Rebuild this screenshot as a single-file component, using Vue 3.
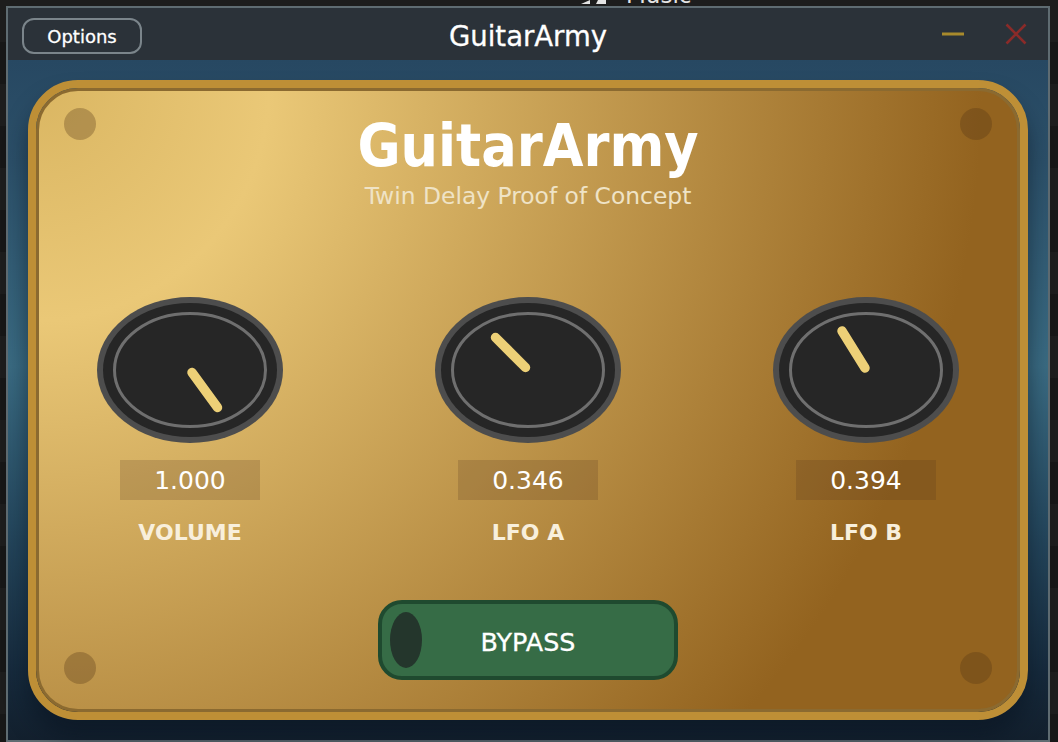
<script setup>
const knobs = [
  { label: "VOLUME", value: "1.000", x1: 95, y1: 75.5, x2: 120.5, y2: 110.5 },
  { label: "LFO A", value: "0.346", x1: 60.5, y1: 40.5, x2: 90.5, y2: 70.5 },
  { label: "LFO B", value: "0.394", x1: 69, y1: 34, x2: 92, y2: 71 },
];
const screws = ["tl", "tr", "bl", "br"];
</script>

<template>
  <div class="desk">
    <div class="behind">
      <svg class="behind-icon" viewBox="0 0 30 6" width="30" height="6">
        <path d="M1 4 L10 0 V4 Z M16 4 L18 0 H26 V4 Z" fill="#e4e4e4" />
      </svg>
      <span class="behind-text">Music</span>
    </div>

    <div class="window">
      <!-- TITLE BAR -->
      <header class="titlebar">
        <div class="bar-left">
          <button class="options">Options</button>
        </div>
        <div class="bar-title">GuitarArmy</div>
        <div class="bar-right">
          <svg class="win-btn" viewBox="0 0 24 24" width="24" height="24">
            <path d="M1 12 H23" stroke="#a88a2c" stroke-width="3" />
          </svg>
          <svg class="win-btn" viewBox="0 0 24 24" width="24" height="24">
            <path d="M2.5 2.5 L21.5 21.5 M21.5 2.5 L2.5 21.5" stroke="#8a2b29" stroke-width="2.6" />
          </svg>
        </div>
      </header>

      <!-- PLUGIN BODY -->
      <main class="body">
        <section class="panel">
          <div class="plate">
            <span v-for="s in screws" :key="s" class="screw" :class="s"></span>

            <h1 class="title">GuitarArmy</h1>
            <p class="subtitle">Twin Delay Proof of Concept</p>

            <div class="knobs">
              <div v-for="k in knobs" :key="k.label" class="knob-col">
                <svg class="knob" viewBox="0 0 186 146" width="186" height="146">
                  <ellipse cx="93" cy="73" rx="93" ry="73" fill="#4d4d4d" />
                  <ellipse cx="93" cy="73" rx="87" ry="67" fill="#262626" />
                  <ellipse cx="93" cy="73" rx="75.5" ry="56.5" fill="none" stroke="#6f6f6f" stroke-width="3" />
                  <line
                    :x1="k.x1"
                    :y1="k.y1"
                    :x2="k.x2"
                    :y2="k.y2"
                    stroke="#edd077"
                    stroke-width="9.5"
                    stroke-linecap="round"
                  />
                </svg>
                <div class="readout">{{ k.value }}</div>
                <div class="knob-label">{{ k.label }}</div>
              </div>
            </div>

            <button class="bypass">
              <span class="led"></span>
              BYPASS
            </button>
          </div>
        </section>
      </main>
    </div>
  </div>
</template>

<style>
html,
body {
  margin: 0;
  background: #191919;
  overflow: hidden;
}
</style>

<style scoped>
.desk {
  position: relative;
  width: 1058px;
  height: 742px;
  overflow: hidden;
  box-sizing: border-box;
  padding: 6px 8px 0 6px;
  background: repeating-linear-gradient(180deg, #1d1d1d 0, #1d1d1d 42px, #171717 42px, #171717 84px);
  font-family: "DejaVu Sans", sans-serif;
}

.behind {
  position: absolute;
  top: 0;
  left: 578px;
  height: 6px;
  width: 130px;
  overflow: hidden;
}

.behind-icon {
  position: absolute;
  left: 2px;
  top: 0;
}

.behind-text {
  position: absolute;
  left: 48px;
  top: -18px;
  color: #e4e4e4;
  font-size: 23px;
  line-height: 26px;
}

.window {
  width: 1044px;
  height: 736px;
  box-sizing: border-box;
  border: 2px solid #5f6c72;
  display: flex;
  flex-direction: column;
}

.titlebar {
  height: 52px;
  flex: none;
  background: #2b3239;
  display: grid;
  grid-template-columns: 1fr auto 1fr;
  align-items: center;
}

.bar-left {
  padding-left: 14px;
  display: flex;
  margin-top: 4px;
}

.options {
  width: 120px;
  height: 36px;
  box-sizing: border-box;
  border: 2px solid #7b858b;
  border-radius: 12px;
  background: transparent;
  color: #fff;
  font-family: inherit;
  font-size: 18px;
  -webkit-text-stroke: 0.3px #fff;
  padding: 0;
}

.bar-title {
  color: #fff;
  font-size: 27.5px;
  -webkit-text-stroke: 0.3px #fff;
  margin-top: 4px;
}

.bar-right {
  display: flex;
  justify-content: flex-end;
  gap: 39px;
  padding-right: 20px;
}

.body {
  flex: 1;
  padding: 20px;
  background: linear-gradient(180deg, #274862 0%, #2c5069 15%, #3a6b82 45%, #24465c 70%, #162a3c 90%, #13202e 100%);
}

.panel {
  height: 640px;
  box-sizing: border-box;
  border: 8px solid #be8f36;
  border-radius: 50px;
  box-shadow: 0 18px 22px rgba(10, 20, 32, 0.55);
}

.plate {
  position: relative;
  height: 624px;
  box-sizing: border-box;
  border: 3px solid #8b6a30;
  border-radius: 42px;
  display: flex;
  flex-direction: column;
  align-items: center;
  background: radial-gradient(circle 946px at 0 0, #dab662 0, #eac877 233px, #93631f 946px);
  background-origin: border-box;
}

.screw {
  position: absolute;
  width: 32px;
  height: 32px;
  border-radius: 50%;
  background: rgba(80, 50, 20, 0.3);
}

.screw.tl {
  top: 17px;
  left: 25px;
}

.screw.tr {
  top: 17px;
  right: 25px;
}

.screw.bl {
  bottom: 25px;
  left: 25px;
}

.screw.br {
  bottom: 25px;
  right: 25px;
}

.title {
  margin: 22px 0 2px;
  color: #fff;
  font-size: 58.5px;
  font-stretch: condensed;
  line-height: 66px;
  font-weight: 700;
}

.subtitle {
  margin: 0;
  color: #efe3c6;
  font-size: 23.4px;
  line-height: 30px;
}

.knobs {
  margin-top: 86px;
  display: grid;
  grid-template-columns: repeat(3, 338px);
}

.knob-col {
  display: flex;
  flex-direction: column;
  align-items: center;
}

.knob {
  display: block;
}

.readout {
  margin-top: 17px;
  width: 140px;
  height: 40px;
  background: rgba(80, 50, 30, 0.2);
  color: #fff;
  font-size: 25px;
  line-height: 42px;
  text-align: center;
}

.knob-label {
  margin-top: 17px;
  color: #f8efdc;
  font-size: 22px;
  line-height: 32px;
  font-weight: 700;
}

.bypass {
  position: relative;
  margin-top: 51px;
  width: 300px;
  height: 80px;
  box-sizing: border-box;
  border: 4px solid #1f4a2f;
  border-radius: 24px;
  background: #366c46;
  color: #fff;
  font-family: inherit;
  font-size: 25.4px;
  -webkit-text-stroke: 0.3px #fff;
  padding: 3px 0 0;
}

.led {
  position: absolute;
  left: 8px;
  top: 8px;
  width: 32px;
  height: 56px;
  border-radius: 50%;
  background: #24362c;
}
</style>
